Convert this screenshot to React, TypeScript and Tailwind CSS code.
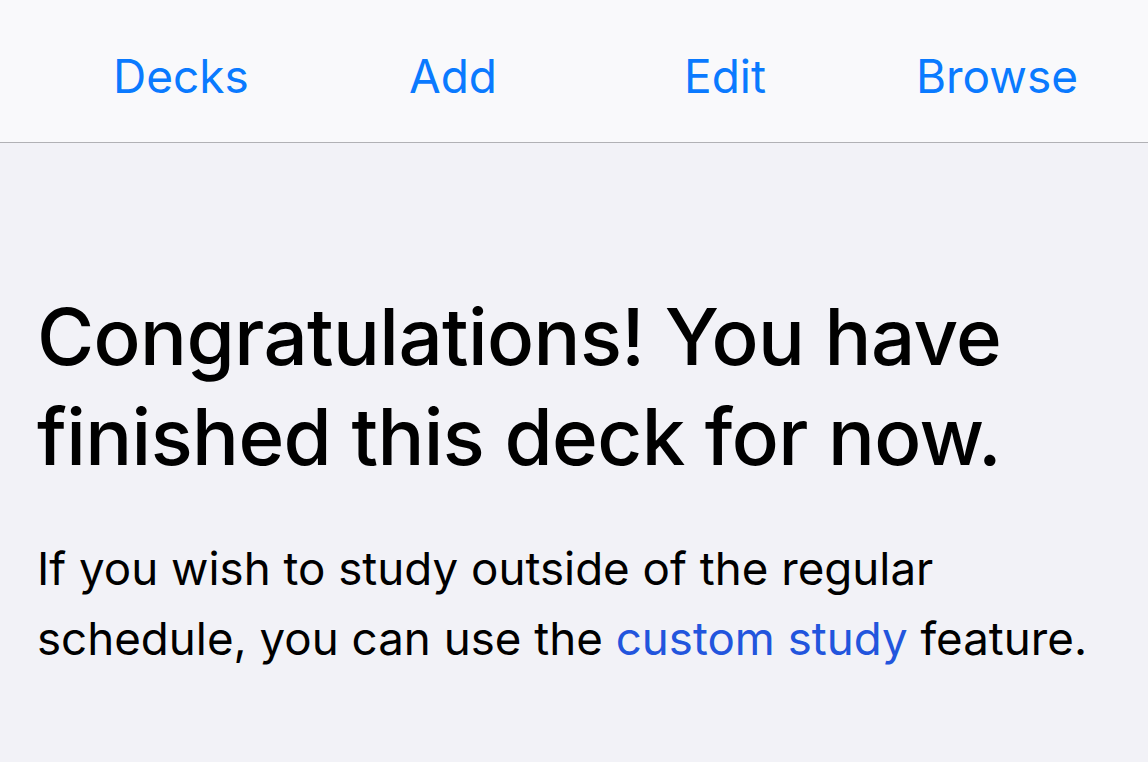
import React from "react";

export default function App() {
  const font = { fontFamily: "Inter, 'Noto Sans', sans-serif" };
  return (
    <div className="w-[1148px] h-[762px] bg-[#f2f2f7] overflow-hidden" style={font}>
      <div className="h-[143px] bg-[#f9f9fb] border-b border-[#b1b1b5] flex items-center pl-[45px] pt-[10px]">
        {["Decks", "Add", "Edit", "Browse"].map((t) => (
          <div key={t} className="w-[272px] text-center text-[46px] text-[#0a7aff] leading-none">
            {t}
          </div>
        ))}
      </div>
      <div className="px-[37px] pt-[144px]">
        <h1 className="text-[78px] leading-[100px] font-medium text-black tracking-[-0.6px]">
          Congratulations! You have finished this deck for now.
        </h1>
        <p className="mt-[47px] text-[45.7px] leading-[70px] text-black">
          If you wish to study outside of the regular schedule, you can use the{" "}
          <span className="text-[#2255dd]">custom study</span> feature.
        </p>
      </div>
    </div>
  );
}
